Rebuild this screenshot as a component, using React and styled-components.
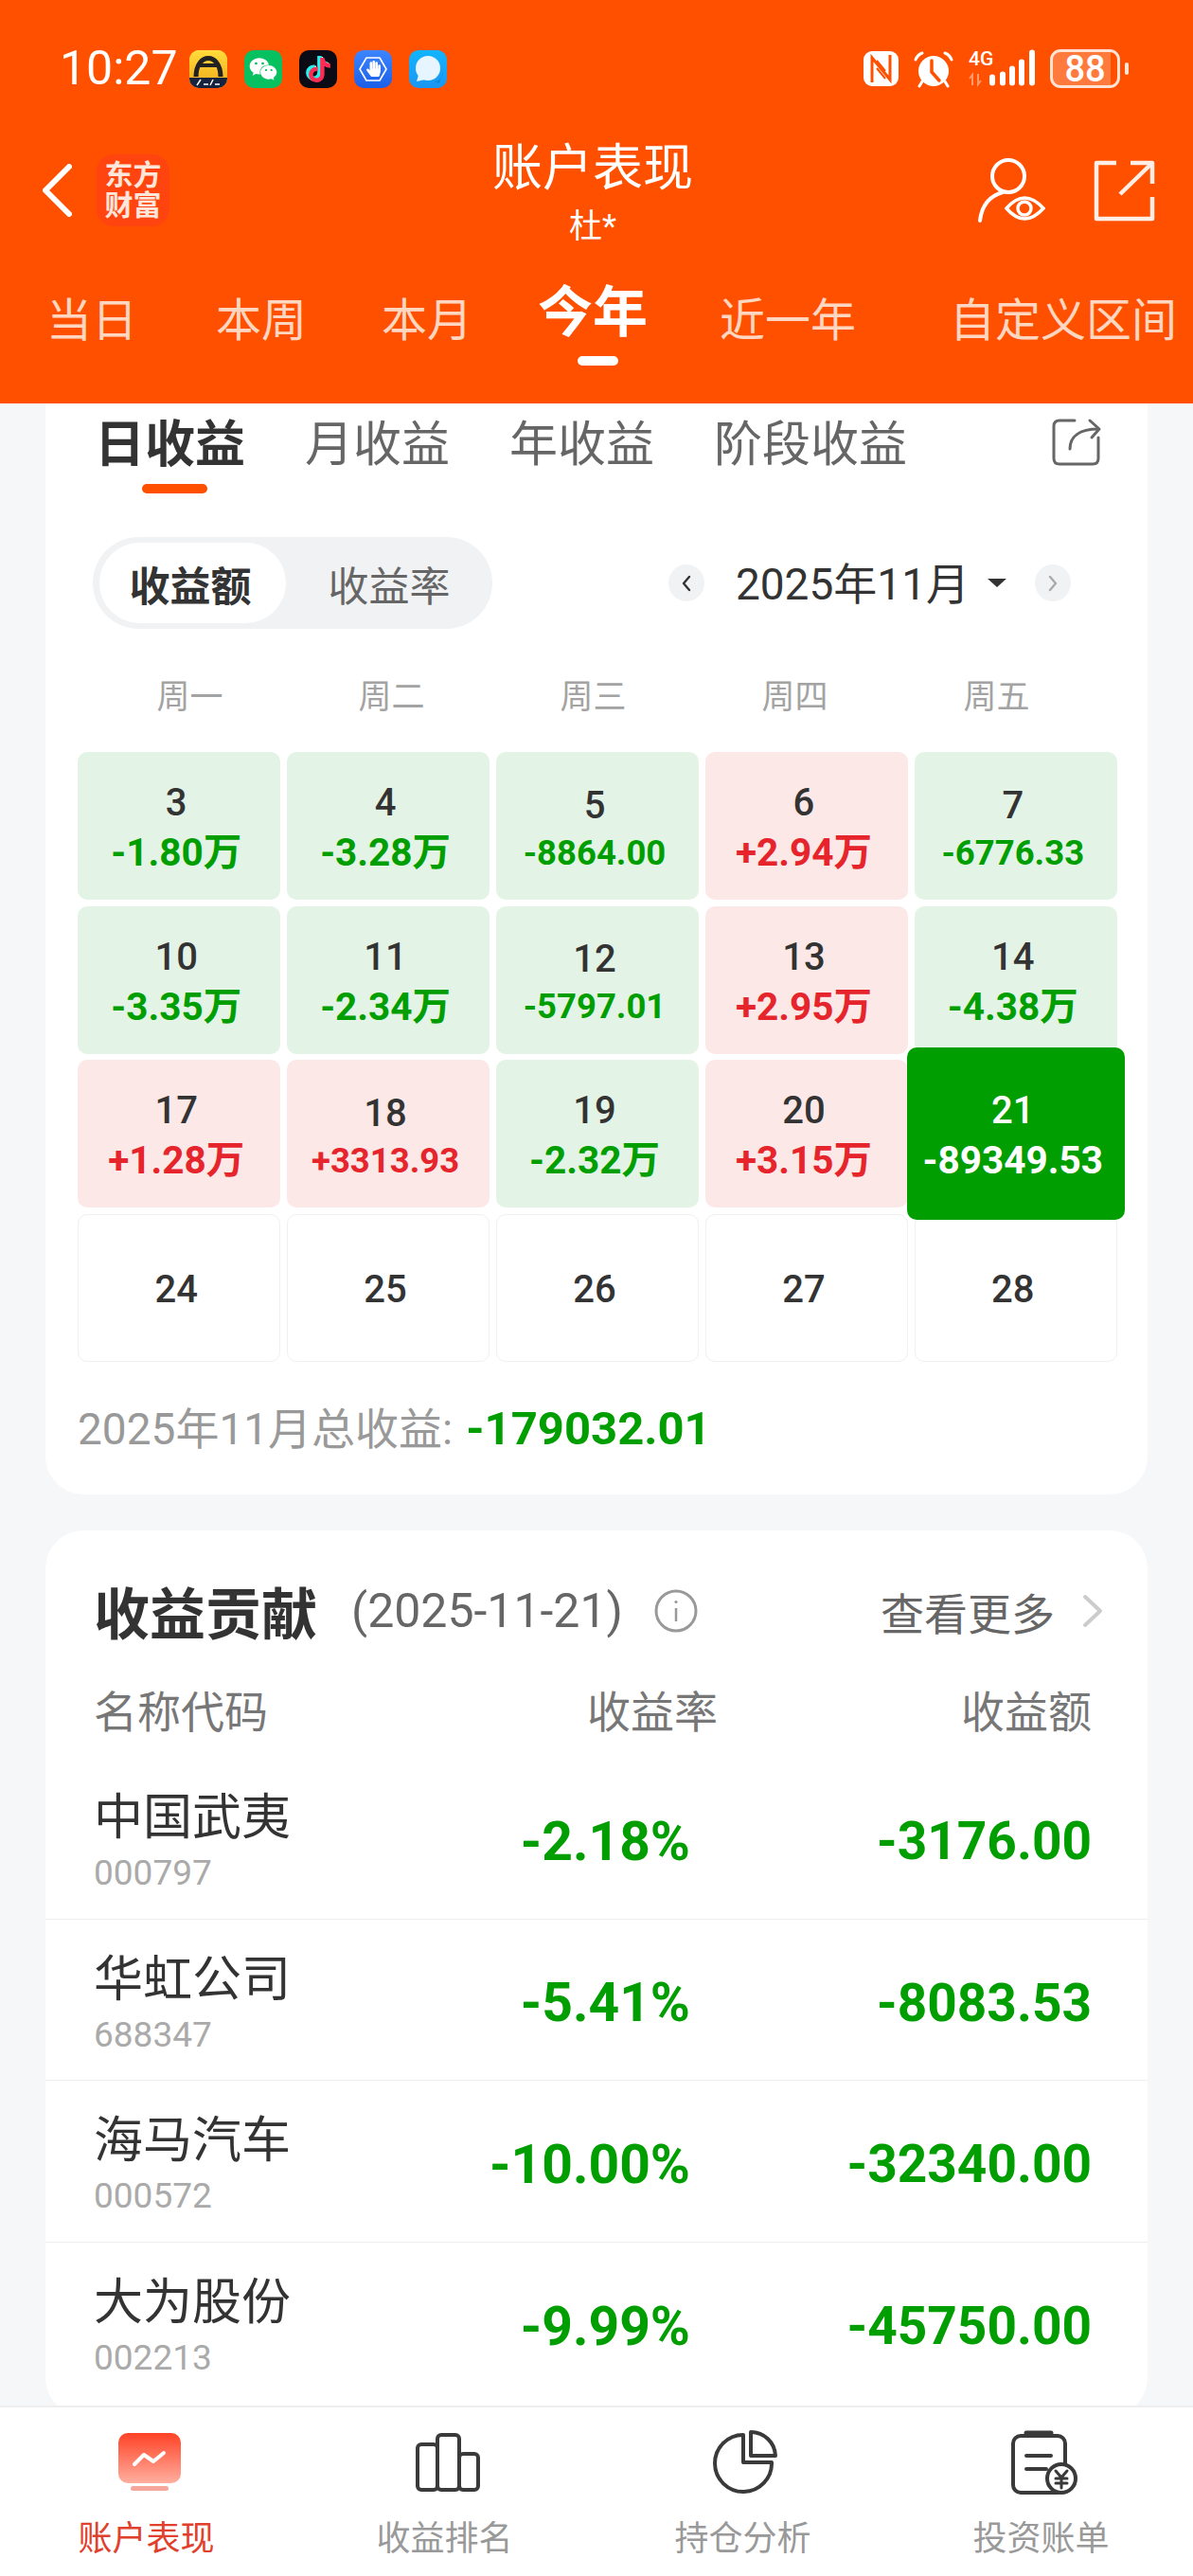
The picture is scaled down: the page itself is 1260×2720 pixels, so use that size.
import styled, { createGlobalStyle } from "styled-components";
import { FaTiktok, FaWeixin, FaHandPaper } from "react-icons/fa";

const GlobalStyle = createGlobalStyle`
  html, body {
    margin: 0;
    padding: 0;
    background: #f6f7f9;
  }
  * {
    box-sizing: border-box;
  }
  body {
    font-family: Roboto, "Noto Sans CJK SC", sans-serif;
  }
`

const GREEN = '#009e00'
const RED = '#e5252b'

const Page = styled.div`
  width: 1260px;
  height: 2720px;
  overflow: hidden;
  display: flex;
  flex-direction: column;
  background: #f6f7f9;
`

const Header = styled.header`
  height: 426px;
  flex-shrink: 0;
  background: #ff5000;
  color: #fff;
  padding-top: 52px;
`
const StatusBar = styled.div`
  height: 41px;
  display: flex;
  align-items: center;
  justify-content: space-between;
  padding: 0 68px 0 63px;
`
const StatusLeft = styled.div`
  display: flex;
  align-items: center;
  gap: 18px;
`
const Time = styled.span`
  font-size: 50px;
  line-height: 41px;
  width: 125px;
  margin-right: -6px;
  white-space: nowrap;
`
const AppIcon = styled.div`
  width: 40px;
  height: 40px;
  border-radius: 10px;
  overflow: hidden;
  display: flex;
  align-items: center;
  justify-content: center;
  background: ${p => p.$bg};
  svg {
    display: block;
  }
`
const TikTokStack = styled.div`
  display: grid;
  width: 26px;
  height: 26px;
  svg {
    grid-area: 1 / 1;
  }
  svg:nth-child(1) {
    color: #25f4ee;
    transform: translate(-1.5px, -1px);
  }
  svg:nth-child(2) {
    color: #fe2c55;
    transform: translate(1.5px, 1px);
  }
  svg:nth-child(3) {
    color: #fff;
  }
`
const GuardStack = styled.div`
  display: grid;
  place-items: center;
  width: 40px;
  height: 40px;
  svg {
    grid-area: 1 / 1;
  }
`
const StatusRight = styled.div`
  display: flex;
  align-items: center;
  gap: 16px;
`
const BatteryWrap = styled.div`
  display: flex;
  align-items: center;
  gap: 5px;
`
const Battery = styled.div`
  width: 74px;
  height: 41px;
  border: 3px solid #ffe4d6;
  border-radius: 11px;
  background: linear-gradient(90deg, rgba(255, 255, 255, .24) 90%, transparent 90%);
  display: flex;
  align-items: center;
  justify-content: center;
  font-size: 38px;
  font-weight: 500;
  line-height: 1;
`
const BatteryNub = styled.div`
  width: 4px;
  height: 13px;
  border-radius: 2px;
  background: #ffe4d6;
`

const TitleBar = styled.div`
  display: grid;
  grid-template-columns: 430px 302px 1fr;
  height: 124px;
  margin-top: 50px;
  padding: 0 40px 0 45px;
`
const TitleLeft = styled.div`
  display: flex;
  align-items: center;
  gap: 26px;
  height: 76px;
  margin-top: 20px;
`
const Logo = styled.div`
  width: 77px;
  height: 76px;
  border-radius: 18px;
  background: #ff4410;
  color: #ffe6da;
  font-size: 30px;
  font-weight: 700;
  line-height: 32px;
  text-align: center;
  padding-top: 6px;
`
const TitleCenter = styled.div`
  text-align: center;
`
const Title = styled.div`
  font-size: 53px;
  line-height: 70px;
`
const SubTitle = styled.div`
  font-size: 35px;
  line-height: 54px;
`
const TitleRight = styled.div`
  display: flex;
  align-items: center;
  justify-content: flex-end;
  gap: 50px;
  height: 76px;
  margin-top: 20px;
`

const PeriodTabs = styled.div`
  display: flex;
  align-items: flex-start;
  margin-top: 42px;
  padding-left: 49px;
`
const PeriodTab = styled.div`
  position: relative;
  flex-shrink: 0;
  margin-left: ${p => p.$gap}px;
  margin-top: ${p => (p.$active ? -9 : 0)}px;
  font-size: ${p => (p.$active ? 58 : 48)}px;
  font-weight: ${p => (p.$active ? 700 : 400)};
  line-height: 60px;
  color: ${p => (p.$active ? '#fff' : '#ffd6c0')};
  white-space: nowrap;
  ${p => p.$active && `
    &::after {
      content: '';
      position: absolute;
      left: 42px;
      top: 76px;
      width: 43px;
      height: 10px;
      border-radius: 5px;
      background: #fff;
    }
  `}
`

const Main = styled.main`
  flex: 1;
  min-height: 0;
  overflow: hidden;
`
const CalendarCard = styled.section`
  margin: 0 48px;
  padding: 14px 0 39px;
  background: #fff;
  border-radius: 0 0 40px 40px;
`
const CardTabs = styled.div`
  display: flex;
  align-items: center;
  height: 60px;
  padding: 0 48px 0 52px;
  gap: 63px;
`
const CardTab = styled.div`
  position: relative;
  font-size: ${p => (p.$active ? 53 : 51)}px;
  font-weight: ${p => (p.$active ? 700 : 400)};
  line-height: 60px;
  color: ${p => (p.$active ? '#333' : '#666')};
  white-space: nowrap;
  ${p => p.$active && `
    &::after {
      content: '';
      position: absolute;
      left: 50px;
      top: 71px;
      width: 69px;
      height: 10px;
      border-radius: 5px;
      background: #ff5000;
    }
  `}
`
const CardTabShare = styled.div`
  margin-left: auto;
  height: 52px;
  margin-top: -6px;
`
const ControlRow = styled.div`
  display: flex;
  align-items: center;
  justify-content: space-between;
  margin-top: 67px;
  padding: 0 81px 0 50px;
`
const Toggle = styled.div`
  width: 422px;
  height: 97px;
  padding: 6px 0 6px 7px;
  border-radius: 49px;
  background: #f1f2f4;
  display: flex;
`
const ToggleItem = styled.div`
  flex: ${p => (p.$active ? '0 0 197px' : 1)};
  padding-right: ${p => (p.$active ? 5 : 0)}px;
  border-radius: 43px;
  background: ${p => (p.$active ? '#fff' : 'transparent')};
  font-size: 43px;
  font-weight: ${p => (p.$active ? 700 : 400)};
  color: ${p => (p.$active ? '#333' : '#666')};
  display: flex;
  align-items: center;
  justify-content: center;
`
const DatePicker = styled.div`
  display: flex;
  align-items: center;
`
const DateArrow = styled.div`
  width: 38px;
  height: 39px;
  border-radius: 50%;
  background: #f1f2f4;
  display: flex;
  align-items: center;
  justify-content: center;
  color: ${p => p.$color};
`
const DateText = styled.div`
  font-size: 46px;
  line-height: 60px;
  color: #333;
  margin: 3px 19px 0 33px;
  white-space: nowrap;
`
const Caret = styled.div`
  width: 0;
  height: 0;
  margin-right: 30px;
  border-left: 10px solid transparent;
  border-right: 10px solid transparent;
  border-top: 9px solid #333;
`
const Weekdays = styled.div`
  display: grid;
  grid-template-columns: repeat(5, 213px);
  margin-top: 48px;
  padding-left: 46px;
`
const Weekday = styled.div`
  font-size: 35px;
  line-height: 50px;
  color: #a3a3a3;
  text-align: center;
`
const DayGrid = styled.div`
  display: grid;
  grid-template-columns: repeat(5, 1fr);
  grid-auto-rows: 156px;
  gap: 6.5px;
  width: 1098px;
  margin: 32px 0 0 34px;
`
const toneBg = {
  down: '#e3f4e6',
  up: '#fde8e8',
  active: GREEN,
  empty: '#fff',
}
const DayCell = styled.div`
  position: ${p => (p.$tone === 'active' ? 'relative' : 'static')};
  z-index: ${p => (p.$tone === 'active' ? 1 : 'auto')};
  margin: ${p => (p.$tone === 'active' ? '-13px -8px' : 0)};
  padding: 4px 6px 0 0;
  border-radius: 10px;
  background: ${p => toneBg[p.$tone]};
  border: ${p => (p.$tone === 'empty' ? '1px solid #f0f0f0' : 'none')};
  display: flex;
  flex-direction: column;
  align-items: center;
  justify-content: center;
  color: ${p => (p.$tone === 'active' ? '#fff' : '#333')};
`
const DayNumber = styled.div`
  font-size: 40px;
  font-weight: 500;
  line-height: 53px;
`
const DayAmount = styled.div`
  font-size: ${p => (p.$small ? 36.5 : 40.5)}px;
  font-weight: 700;
  line-height: ${p => (p.$small ? 48 : 53)}px;
  white-space: nowrap;
  color: ${p => (p.$tone === 'active' ? '#fff' : p.$tone === 'up' ? RED : GREEN)};
`
const MonthTotal = styled.div`
  margin: 41px 0 0 34px;
  font-size: 46px;
  line-height: 60px;
  color: #999;
  white-space: nowrap;
  b {
    margin-left: 14px;
    font-size: 49px;
    font-weight: 700;
    color: ${GREEN};
  }
`

const ContributionCard = styled.section`
  margin: 38px 48px 0;
  padding: 55px 0 13px;
  background: #fff;
  border-radius: 40px;
`
const ContribHead = styled.div`
  display: flex;
  align-items: center;
  height: 60px;
  padding: 0 46px 0 51px;
`
const ContribTitle = styled.div`
  font-size: 59px;
  font-weight: 700;
  color: #333;
  white-space: nowrap;
`
const ContribDate = styled.div`
  margin-left: 36px;
  font-size: 50px;
  color: #666;
  white-space: nowrap;
`
const InfoIcon = styled.div`
  margin-left: 33px;
  height: 46px;
`
const MoreLink = styled.div`
  margin-left: auto;
  display: flex;
  align-items: center;
  gap: 28px;
  font-size: 46px;
  color: #666;
  white-space: nowrap;
`
const ColumnHead = styled.div`
  display: grid;
  grid-template-columns: 1fr 300px 395px;
  margin-top: 52px;
  padding: 0 59px 0 51px;
  font-size: 46px;
  line-height: 50px;
  color: #777;
`
const AlignRight = styled.div`
  text-align: right;
`
const HoldingRow = styled.div`
  display: grid;
  grid-template-columns: 1fr 300px 424px;
  align-items: center;
  height: 170.5px;
  padding: 7px 59px 0 51px;
  border-bottom: ${p => (p.$last ? 'none' : '1px solid #eee')};
`
const HoldingList = styled.div`
  margin-top: 23.5px;
`
const HoldingName = styled.div`
  font-size: 52px;
  line-height: 66px;
  color: #333;
  white-space: nowrap;
`
const HoldingCode = styled.div`
  font-size: 37px;
  line-height: 46px;
  margin-top: 2px;
  color: #aaa;
`
const HoldingValue = styled.div`
  font-size: ${p => p.$size}px;
  font-weight: 700;
  color: ${GREEN};
  text-align: right;
  white-space: nowrap;
`

const BottomNav = styled.nav`
  height: 180px;
  flex-shrink: 0;
  border-top: 2px solid #eee;
  background: #fff;
  display: grid;
  grid-template-columns: repeat(4, 1fr);
  padding-top: 22px;
`
const NavItem = styled.div`
  display: flex;
  flex-direction: column;
  align-items: center;
`
const NavIcon = styled.svg`
  width: 72px;
  height: 72px;
  display: block;
  fill: none;
  stroke: #3a3a3a;
  stroke-width: 4;
  stroke-linecap: round;
  stroke-linejoin: round;
`
const NavLabel = styled.div`
  margin: 20px 6px 0 0;
  font-size: 36px;
  line-height: 50px;
  color: ${p => (p.$active ? '#e0402c' : '#999')};
`

const BackChevron = () => (
  <svg width="31" height="56" viewBox="0 0 31 56" fill="none" stroke="#fff" strokeWidth="6" strokeLinecap="round" strokeLinejoin="round">
    <path d="M28 3 L3 28 L28 53"/>
  </svg>
)
const WatchIcon = () => (
  <svg width="72" height="70" viewBox="0 0 72 70" fill="none" stroke="#fff" strokeWidth="4" strokeLinecap="round">
    <circle cx="33" cy="20" r="17"/>
    <path d="M3 67 C5 50 13 41 27 37"/>
    <path d="M31 54 Q50 32 70 54 Q50 76 31 54 Z" fill="#ff5000" strokeWidth="3.5"/>
    <circle cx="50" cy="54" r="7" strokeWidth="3.5"/>
  </svg>
)
const ExportIcon = () => (
  <svg width="66" height="66" viewBox="0 0 66 66" fill="none" stroke="#ffeee6" strokeWidth="4.5" strokeLinejoin="round">
    <path d="M25 4 H4 V63 H63 V40"/>
    <path d="M29 37 L63 4"/>
    <path d="M40 4 H63 V26"/>
  </svg>
)
const CardShareIcon = () => (
  <svg width="54" height="52" viewBox="0 0 54 52" fill="none" stroke="#666" strokeWidth="3" strokeLinecap="round" strokeLinejoin="round">
    <path d="M25 3 H9 Q3 3 3 9 V43 Q3 49 9 49 H44 Q50 49 50 43 V21"/>
    <path d="M20 33 C20 20 30 12 50 12"/>
    <path d="M41 3 L51 12 L43 21"/>
  </svg>
)
const InfoGlyph = () => (
  <svg width="46" height="46" viewBox="0 0 46 46" fill="none" stroke="#999" strokeWidth="3">
    <circle cx="23" cy="23" r="21"/>
    <path d="M23 20 V34" strokeWidth="2.5"/>
    <circle cx="23" cy="13.5" r="1.6" fill="#999" stroke="none"/>
  </svg>
)
const MoreChevron = () => (
  <svg width="24" height="36" viewBox="0 0 24 36" fill="none" stroke="#ccc" strokeWidth="4" strokeLinecap="round" strokeLinejoin="round">
    <path d="M4 3 L20 18 L4 33"/>
  </svg>
)
const TinyChevron = ({ left }) => (
  <svg width="12" height="20" viewBox="0 0 12 20" fill="none" stroke="currentColor" strokeWidth="2.4" strokeLinecap="round" strokeLinejoin="round">
    <path d={left ? "M9 3 L3 10 L9 17" : "M3 3 L9 10 L3 17"}/>
  </svg>
)

const BrokerApp = () => (
  <svg width="40" height="40" viewBox="0 0 40 40">
    <defs>
      <linearGradient id="brokerBg" x1="0" y1="0" x2="0" y2="1">
        <stop offset="0" stopColor="#ffdc3c"/>
        <stop offset="1" stopColor="#f0a818"/>
      </linearGradient>
    </defs>
    <rect width="40" height="40" fill="url(#brokerBg)"/>
    <path d="M7 28 C7 2 33 2 33 28" fill="none" stroke="#222" strokeWidth="5"/>
    <rect x="9" y="14" width="22" height="4" fill="#222"/>
    <path d="M0 29 H40 V40 H0 Z" fill="#16233f"/>
    <path d="M8 37 L12 31 M15 36 H20 M22 37 L25 31 M27 36 H32" stroke="#fff" strokeWidth="1.5"/>
  </svg>
)
const GuardHexagon = () => (
  <svg width="40" height="40" viewBox="0 0 40 40">
    <path d="M6 20 L13 8 H27 L34 20 L27 32 H13 Z" fill="none" stroke="#fff" strokeWidth="1.6" strokeLinejoin="round"/>
  </svg>
)
const ChatApp = () => (
  <svg width="40" height="40" viewBox="0 0 40 40">
    <path d="M36 22 C36 29 31 33 26 33 L32 35 Z" fill="#0f88e0"/>
    <circle cx="20" cy="19" r="13" fill="#e6f5ff"/>
    <path d="M10 26 L8 33 L17 31 Z" fill="#e6f5ff"/>
  </svg>
)
const NfcIcon = () => (
  <svg width="37" height="37" viewBox="0 0 37 37">
    <rect width="37" height="37" rx="9" fill="#fff"/>
    <path d="M9 33 V7 L28 30 V4" fill="none" stroke="#ff5000" strokeWidth="3"/>
    <path d="M14 10 L23 21 M14 18 L23 29" fill="none" stroke="#ff5000" strokeWidth="2"/>
  </svg>
)
const AlarmIcon = () => (
  <svg width="42" height="40" viewBox="0 0 42 40" fill="none" stroke="#fff" strokeWidth="3" strokeLinecap="round">
    <path d="M2 10 Q4 5 9 3 M40 10 Q38 5 33 3"/>
    <path d="M9 33 L6 38 M33 33 L36 38"/>
    <circle cx="21" cy="22" r="16" fill="#fff" stroke="none"/>
    <path d="M19 11 V23 L27 32" stroke="#ff5000" strokeWidth="3.5"/>
  </svg>
)
const SignalIcon = () => (
  <svg width="70" height="48" viewBox="0 -7 70 48" fill="#fff">
    <text x="0" y="12.5" fontFamily="Roboto, sans-serif" fontWeight="500" fontSize="21">4G</text>
    <path d="M4 34 V23 L1 27 M10 22 V33 L13 29" fill="none" stroke="#ff9a6a" strokeWidth="2"/>
    <rect x="22" y="22.5" width="6" height="12" rx="3"/>
    <rect x="33" y="19.5" width="6" height="15" rx="3"/>
    <rect x="43" y="13.5" width="6" height="21" rx="3"/>
    <rect x="53" y="6.5" width="6" height="28" rx="3"/>
    <rect x="64" y="-3.5" width="6" height="38" rx="3"/>
  </svg>
)

const weeks = [
  { day: 3, amount: '-1.80万', tone: 'down' },
  { day: 4, amount: '-3.28万', tone: 'down' },
  { day: 5, amount: '-8864.00', tone: 'down', small: true },
  { day: 6, amount: '+2.94万', tone: 'up' },
  { day: 7, amount: '-6776.33', tone: 'down', small: true },
  { day: 10, amount: '-3.35万', tone: 'down' },
  { day: 11, amount: '-2.34万', tone: 'down' },
  { day: 12, amount: '-5797.01', tone: 'down', small: true },
  { day: 13, amount: '+2.95万', tone: 'up' },
  { day: 14, amount: '-4.38万', tone: 'down' },
  { day: 17, amount: '+1.28万', tone: 'up' },
  { day: 18, amount: '+3313.93', tone: 'up', small: true },
  { day: 19, amount: '-2.32万', tone: 'down' },
  { day: 20, amount: '+3.15万', tone: 'up' },
  { day: 21, amount: '-89349.53', tone: 'active' },
  { day: 24, tone: 'empty' },
  { day: 25, tone: 'empty' },
  { day: 26, tone: 'empty' },
  { day: 27, tone: 'empty' },
  { day: 28, tone: 'empty' },
]

const holdings = [
  { name: '中国武夷', code: '000797', rate: '-2.18%', amount: '-3176.00' },
  { name: '华虹公司', code: '688347', rate: '-5.41%', amount: '-8083.53' },
  { name: '海马汽车', code: '000572', rate: '-10.00%', amount: '-32340.00' },
  { name: '大为股份', code: '002213', rate: '-9.99%', amount: '-45750.00' },
]

const periods = [
  { label: '当日', gap: 0 },
  { label: '本周', gap: 83 },
  { label: '本月', gap: 79 },
  { label: '今年', gap: 69, active: true },
  { label: '近一年', gap: 76 },
  { label: '自定义区间', gap: 99 },
]

const App = () => {
  return (
    <Page>
      <GlobalStyle/>
      <Header>
        <StatusBar>
          <StatusLeft>
            <Time>10:27</Time>
            <AppIcon $bg="#ffd02a"><BrokerApp/></AppIcon>
            <AppIcon $bg="#07c160"><FaWeixin size={30} color="#fff"/></AppIcon>
            <AppIcon $bg="#0b0b16">
              <TikTokStack>
                <FaTiktok size={26}/>
                <FaTiktok size={26}/>
                <FaTiktok size={26}/>
              </TikTokStack>
            </AppIcon>
            <AppIcon $bg="linear-gradient(180deg,#3d86ff,#1b5fe8)">
              <GuardStack>
                <GuardHexagon/>
                <FaHandPaper size={17} color="#fff"/>
              </GuardStack>
            </AppIcon>
            <AppIcon $bg="linear-gradient(180deg,#12b4ff,#1a96f2)"><ChatApp/></AppIcon>
          </StatusLeft>
          <StatusRight>
            <NfcIcon/>
            <AlarmIcon/>
            <SignalIcon/>
            <BatteryWrap>
              <Battery>88</Battery>
              <BatteryNub/>
            </BatteryWrap>
          </StatusRight>
        </StatusBar>

        <TitleBar>
          <TitleLeft>
            <BackChevron/>
            <Logo>东方<br/>财富</Logo>
          </TitleLeft>
          <TitleCenter>
            <Title>账户表现</Title>
            <SubTitle>杜*</SubTitle>
          </TitleCenter>
          <TitleRight>
            <WatchIcon/>
            <ExportIcon/>
          </TitleRight>
        </TitleBar>

        <PeriodTabs>
          {periods.map(item => (
            <PeriodTab key={item.label} $gap={item.gap} $active={item.active}>{item.label}</PeriodTab>
          ))}
        </PeriodTabs>
      </Header>

      <Main>
        <CalendarCard>
          <CardTabs>
            <CardTab $active>日收益</CardTab>
            <CardTab>月收益</CardTab>
            <CardTab>年收益</CardTab>
            <CardTab>阶段收益</CardTab>
            <CardTabShare><CardShareIcon/></CardTabShare>
          </CardTabs>

          <ControlRow>
            <Toggle>
              <ToggleItem $active>收益额</ToggleItem>
              <ToggleItem>收益率</ToggleItem>
            </Toggle>
            <DatePicker>
              <DateArrow $color="#333"><TinyChevron left/></DateArrow>
              <DateText>2025年11月</DateText>
              <Caret/>
              <DateArrow $color="#aaa"><TinyChevron/></DateArrow>
            </DatePicker>
          </ControlRow>

          <Weekdays>
            {['周一', '周二', '周三', '周四', '周五'].map(d => <Weekday key={d}>{d}</Weekday>)}
          </Weekdays>

          <DayGrid>
            {weeks.map(cell => (
              <DayCell key={cell.day} $tone={cell.tone}>
                <DayNumber>{cell.day}</DayNumber>
                {cell.amount && <DayAmount $tone={cell.tone} $small={cell.small}>{cell.amount}</DayAmount>}
              </DayCell>
            ))}
          </DayGrid>

          <MonthTotal>2025年11月总收益:<b>-179032.01</b></MonthTotal>
        </CalendarCard>

        <ContributionCard>
          <ContribHead>
            <ContribTitle>收益贡献</ContribTitle>
            <ContribDate>(2025-11-21)</ContribDate>
            <InfoIcon><InfoGlyph/></InfoIcon>
            <MoreLink>查看更多<MoreChevron/></MoreLink>
          </ContribHead>
          <ColumnHead>
            <div>名称代码</div>
            <AlignRight>收益率</AlignRight>
            <AlignRight>收益额</AlignRight>
          </ColumnHead>
          <HoldingList>
            {holdings.map((row, i) => (
              <HoldingRow key={row.code} $last={i === holdings.length - 1}>
                <div>
                  <HoldingName>{row.name}</HoldingName>
                  <HoldingCode>{row.code}</HoldingCode>
                </div>
                <HoldingValue $size={57}>{row.rate}</HoldingValue>
                <HoldingValue $size={55}>{row.amount}</HoldingValue>
              </HoldingRow>
            ))}
          </HoldingList>
        </ContributionCard>
      </Main>

      <BottomNav>
        <NavItem>
          <NavIcon viewBox="0 0 72 72">
            <defs>
              <linearGradient id="navActive" x1="0" y1="0" x2="0" y2="1">
                <stop offset="0" stopColor="#ff4226"/>
                <stop offset="1" stopColor="#ffaf9f"/>
              </linearGradient>
            </defs>
            <rect x="3" y="5" width="66" height="53" rx="10" fill="url(#navActive)" stroke="none"/>
            <rect x="16" y="61" width="40" height="5" rx="2.5" fill="#f5a79c" stroke="none"/>
            <path d="M20 38 L30 28 L40 35 L51 26" stroke="#fff"/>
          </NavIcon>
          <NavLabel $active>账户表现</NavLabel>
        </NavItem>
        <NavItem>
          <NavIcon viewBox="0 0 72 72">
            <rect x="4" y="17" width="21" height="48" rx="4"/>
            <rect x="25" y="7" width="23" height="58" rx="4"/>
            <rect x="48" y="27" width="20" height="38" rx="4"/>
          </NavIcon>
          <NavLabel>收益排名</NavLabel>
        </NavItem>
        <NavItem>
          <NavIcon viewBox="0 0 72 72">
            <path d="M33 7 A30 30 0 1 0 63 36 H33 Z"/>
            <path d="M41 4 V29 H67 A26 26 0 0 0 41 4 Z"/>
          </NavIcon>
          <NavLabel>持仓分析</NavLabel>
        </NavItem>
        <NavItem>
          <NavIcon viewBox="0 0 72 72">
            <rect x="3" y="8" width="55" height="60" rx="8"/>
            <path d="M17 5 H43" strokeWidth="5"/>
            <path d="M17 29 H43 M17 43 H38"/>
            <circle cx="54" cy="53" r="15" fill="#fff"/>
            <path d="M48 45 L54 52 L60 45 M54 52 V63 M48 53 H60 M48 58 H60" strokeWidth="3"/>
          </NavIcon>
          <NavLabel>投资账单</NavLabel>
        </NavItem>
      </BottomNav>
    </Page>
  )
}

export default App
